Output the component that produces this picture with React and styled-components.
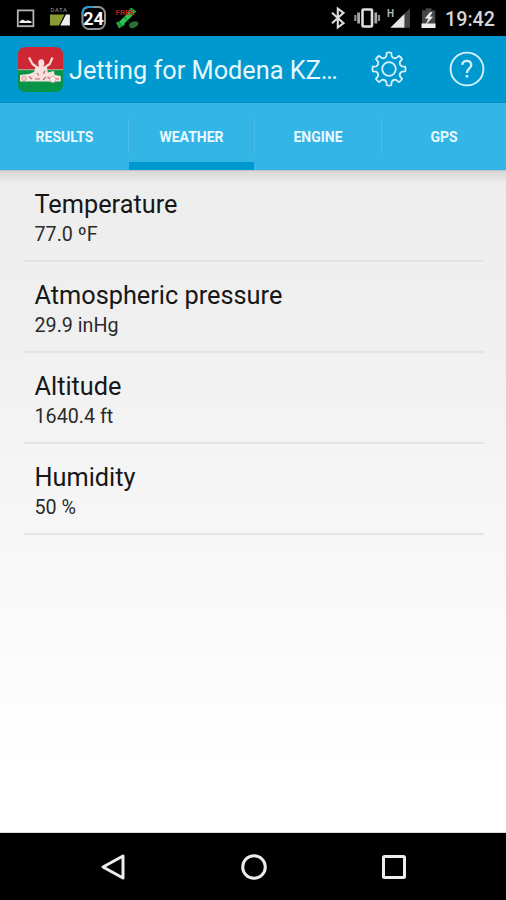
import React, { useState } from "react";
import styled, { createGlobalStyle } from "styled-components";

const tabs = ["Results", "Weather", "Engine", "GPS"];

const readings = [
  { name: "Temperature", value: "77.0 ºF" },
  { name: "Atmospheric pressure", value: "29.9 inHg" },
  { name: "Altitude", value: "1640.4 ft" },
  { name: "Humidity", value: "50 %" },
];

//eight teeth around the center, each one is a small trapezoid joined by a curved valley
const gearPath = () => {
  const at = (r, deg) => {
    const a = (deg * Math.PI) / 180;
    return `${(18 + r * Math.sin(a)).toFixed(2)} ${(18 - r * Math.cos(a)).toFixed(2)}`;
  };
  let d = "";
  for (let i = 0; i < 8; i++) {
    const t = i * 45;
    d += `${i ? "L" : "M"}${at(13, t - 12)} L${at(16.4, t - 8)} Q${at(16.9, t)} ${at(16.4, t + 8)} L${at(13, t + 12)} Q${at(11, t + 22.5)} ${at(13, t + 33)} `;
  }
  return d + "Z";
};

function StatusBar() {
  return (
    <Status>
      <StatusIcons width="125" height="28" viewBox="15 4 125 28">
        <rect x="17.8" y="10.4" width="15.6" height="15.8" fill="none" stroke="#b4b4b4" strokeWidth="1.8" />
        <path d="M19.5 23v-1.5l3-2 3 1.5 2.5-.8 3.5 1.3v1.5z" fill="#eee" />
        <DataText x="50.5" y="12.2">DATA</DataText>
        <path d="M50 14.5h14.5L59 25.5h-9z" fill="#8c9a36" />
        <path d="M60.3 25.5l5.6-11h4v11z" fill="#eee" />
        <rect x="82.5" y="7" width="22.5" height="22" rx="6.5" fill="none" stroke="#8f969a" strokeWidth="2" />
        <path d="M82.5 14v-1q0-6 6-6h5" fill="none" stroke="#2699c8" strokeWidth="2" />
        <DayText x="93.6" y="24.5">24</DayText>
        <path d="M131 7.5l5.5 4-5 4.5-4-3.5z" fill="#21a943" />
        <path d="M116 22.5l6-2 3 4-6 4z" fill="#21a943" />
        <path d="M120 24.5l12-12" stroke="#2cc34e" strokeWidth="5" />
        <path d="M124 17l5 5M119 22l3 4M129 11l4 3" stroke="#116d28" />
        <path d="M129 24q3-3.500 8-2.500 2.500 1 .5 4-4 4-8 2z" fill="#28703a" />
        <FixText x="115.5" y="15">FREE</FixText>
      </StatusIcons>
      <StatusRight>
        <StatusIcons width="112" height="28" viewBox="328 4 112 28">
          <path d="M332 12.8l11.5 10.4-5.7 4.3V8.6l5.7 4.3L332 23.2" fill="none" stroke="#dcdcdc" strokeWidth="2.1" />
          <rect x="362.5" y="9.5" width="9.5" height="17" rx="1" fill="none" stroke="#dedede" strokeWidth="2.6" />
          <path d="M358.6 12.5v11M375.8 12.5v11" stroke="#a6a6a6" strokeWidth="2.8" />
          <path d="M355.3 15v6M379 15v6" stroke="#8c8c8c" strokeWidth="2.2" />
          <NetText x="387" y="17">H</NetText>
          <path d="M404.5 13.8l5.5-5.5v19.5h-5.5z" fill="#444" />
          <path d="M390.3 27.8L404.5 13.8v14z" fill="#e6e6e6" />
          <path d="M422 10.2h3.5v-2h6v2h3.8v14H422z" fill="#454545" />
          <path d="M421.5 23.5h14v4.500h-14z" fill="#eee" />
          <path d="M430 12.5l-4.500 5.700h3.500l-2.500 5.500 6-6.700h-3.400l3-4.500z" fill="#eee" stroke="#eee" strokeWidth="0.7" />
        </StatusIcons>
        <Clock>19:42</Clock>
      </StatusRight>
    </Status>
  );
}

function Logo() {
  return (
    <svg width="45" height="45" viewBox="0 0 45 45">
      <path d="M0 22.5V8q0-8 8-8h29q8 0 8 8v14.5z" fill="#cf2634" />
      <path d="M0 22.5h45V37q0 8-8 8H8q-8 0-8-8z" fill="#079447" />
      <path d="M0 22.7h45" stroke="#d9a393" />
      <path d="M11 10.5l3.5 6.5 5.5 4M34.5 10.5l-2.800 6.500-5.700 4" fill="none" stroke="#f6dcd8" strokeWidth="2.2" strokeLinejoin="round" />
      <ellipse cx="23.3" cy="16" rx="3" ry="3.8" fill="#f8e0dc" />
      <path d="M17.500 20.500l5.500-2 6 2 .8 5 6-1.500 1 4 6 1v5.500H2V28l9-1 5-2z" fill="#f5e2df" />
      <path d="M11 29.5l3 2.500M25 33l3-3M29.500 30l3 2M17 32h5M38 32h3M19 26l2 2.500M27 23.500l-1.500 3.500" stroke="#cf6069" strokeWidth="1.2" />
      <circle cx="6" cy="31.5" r="2" fill="none" stroke="#dc8f90" />
      <circle cx="34.8" cy="32.5" r="3" fill="#f8efed" stroke="#dc9d9c" strokeWidth="0.8" />
    </svg>
  );
}

function App() {
  const [activeTab, setActiveTab] = useState("Weather");

  return (
    <Screen>
      <GlobalStyle />
      <StatusBar />
      <AppBar>
        <Logo />
        <Title>Jetting for Modena KZ…</Title>
        <BarButton aria-label="Settings">
          <svg width="36" height="36" viewBox="0 0 36 36" fill="none" stroke="#d5f1fc" strokeWidth="1.8" strokeLinejoin="round">
            <path d={gearPath()} />
            <circle cx="18" cy="18" r="6.8" />
          </svg>
        </BarButton>
        <BarButton aria-label="Help">
          <svg width="36" height="36" viewBox="0 0 36 36" fill="none" stroke="#d5f1fc" strokeWidth="1.9">
            <circle cx="18" cy="18" r="16.4" />
            <path d="M13.3 13.8Q13.7 9.8 17.8 9.8T22.3 13.8Q22.3 15.8 20.1 17.7T17.9 22" strokeWidth="2.3" />
            <path d="M17.9 24v2.5" strokeWidth="2.5" />
          </svg>
        </BarButton>
      </AppBar>
      <Tabs>
        {tabs.map((tab) => (
          <Tab key={tab} $active={tab === activeTab} onClick={() => setActiveTab(tab)}>
            {tab}
          </Tab>
        ))}
      </Tabs>
      <Content>
        {readings.map((reading) => (
          <Row key={reading.name}>
            <Name>{reading.name}</Name>
            <Value>{reading.value}</Value>
          </Row>
        ))}
      </Content>
      <NavBar>
        <svg width="30" height="30" viewBox="0 0 30 30">
          <path d="M24 4v22L4 15z" />
        </svg>
        <svg width="30" height="30" viewBox="0 0 30 30">
          <circle cx="15" cy="15" r="11.3" />
        </svg>
        <svg width="30" height="30" viewBox="0 0 30 30">
          <rect x="4.5" y="4.5" width="21" height="21" rx="1" />
        </svg>
      </NavBar>
    </Screen>
  );
}

export default App;

const GlobalStyle = createGlobalStyle`
  * {
    box-sizing: border-box;
  }
  body {
    margin: 0;
    font-family: Roboto, "Liberation Sans", sans-serif;
  }
`;
const Screen = styled.div`
  width: 506px;
  height: 900px;
  display: flex;
  flex-direction: column;
  overflow: hidden;
  background: #000;
`;
const Status = styled.div`
  height: 36px;
  flex: none;
  display: flex;
  align-items: center;
  justify-content: space-between;
  padding: 0 11px 0 15px;
`;
const StatusRight = styled.div`
  display: flex;
  align-items: center;
  gap: 5px;
`;
const StatusIcons = styled.svg`
  display: block;
`;
const DataText = styled.text`
  font-size: 6px;
  letter-spacing: 0.6px;
  fill: #9a9a9a;
`;
const DayText = styled.text`
  font-size: 18px;
  font-weight: 700;
  text-anchor: middle;
  fill: #fff;
`;
const FixText = styled.text`
  font-size: 8px;
  font-weight: 700;
  fill: #b3231c;
`;
const NetText = styled.text`
  font-size: 10px;
  font-weight: 700;
  fill: #b5b5b5;
`;
const Clock = styled.span`
  padding-top: 3px;
  font-size: 19.7px;
  font-weight: 500;
  line-height: 36px;
  color: #d6d6d6;
`;
const AppBar = styled.header`
  height: 67px;
  flex: none;
  display: flex;
  align-items: center;
  padding: 1px 0 0 18px;
  background: #0099cf;
  border-bottom: 1px solid #068fc3;
`;
const Title = styled.h1`
  flex: 1;
  margin: 0 0 0 6px;
  padding-top: 3px;
  font-size: 25.3px;
  font-weight: 400;
  line-height: 30px;
  white-space: nowrap;
  color: #e6f7fd;
`;
const BarButton = styled.button`
  width: 78px;
  height: 65px;
  display: flex;
  align-items: center;
  justify-content: center;
  padding: 0 0 1px;
  border: 0;
  background: none;
`;
const Tabs = styled.nav`
  height: 67px;
  flex: none;
  display: grid;
  grid-template-columns: 128px 126px 127px 125px;
  background: #33b5e6;
  //short separators between the tabs
  button + button {
    border-image: linear-gradient(transparent 17px, #4abdea 17px, #4abdea 50px, transparent 50px) 1;
  }
`;
const Tab = styled.button`
  padding: 1px 0 0;
  border: 0 solid transparent;
  border-left-width: 1px;
  font-family: inherit;
  font-size: 14px;
  font-weight: 700;
  text-transform: uppercase;
  color: #e9f9ff;
  background: ${(props) => (props.$active ? "linear-gradient(#0099cf, #0099cf) bottom / 100% 8px no-repeat" : "none")};
`;
const Content = styled.main`
  flex: 1;
  padding: 0 22px 0 24px;
  background: linear-gradient(rgba(0, 0, 0, 0.09), transparent) top / 100% 13px no-repeat,
    linear-gradient(#ededed, #f0f0f0 25%, #f7f7f7 55%, #fff 90%);
  border-top: 1px solid #bdc4c7;
  border-bottom: 1px solid #d8d8d8;
`;
const Row = styled.div`
  height: 91px;
  padding: 19px 0 0 10.5px;
  border-bottom: 2px solid #e4e4e4;
`;
const Name = styled.div`
  font-size: 25.3px;
  line-height: 30px;
  color: #171717;
`;
const Value = styled.div`
  font-size: 19.7px;
  line-height: 30px;
  color: #2b2b2b;
`;
const NavBar = styled.footer`
  height: 67px;
  flex: none;
  display: flex;
  align-items: center;
  justify-content: space-between;
  padding: 0 97px 0 99px;
  svg {
    fill: none;
    stroke: #ededed;
    stroke-width: 3px;
    stroke-linejoin: round;
  }
`;
